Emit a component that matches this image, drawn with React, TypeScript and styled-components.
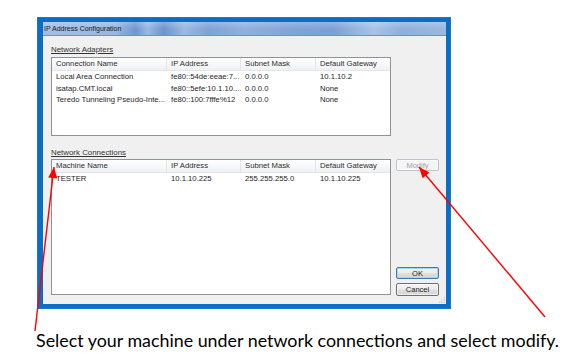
import React from "react";
import styled, { createGlobalStyle } from "styled-components";

const Global = createGlobalStyle`
  html, body { margin: 0; padding: 0; background: #fff; }
  body { width: 577px; height: 358px; overflow: hidden; }
  * { box-sizing: border-box; }
`;

const Page = styled.div`
  position: relative;
  width: 577px;
  height: 358px;
  background: #fff;
  padding: 17px 0 0 36px;
  font-family: "Liberation Sans", Arial, sans-serif;
  display: flex;
  flex-direction: column;
  align-items: flex-start;
`;

const Frame = styled.div`
  margin-left: 1px;
  width: 414px;
  height: 292px;
  background: #0b6dc5;
  padding: 5px 5px 5px 6px;
  display: flex;
  flex-direction: column;
  box-shadow: inset 0 0 0 1px #1e78cc;
`;

const TitleBar = styled.div`
  height: 14px;
  flex: none;
  display: flex;
  align-items: center;
  padding-left: 1px;
  font-size: 7px;
  color: #1a1a1a;
  border-bottom: 1px solid #6f92c2;
  background:
    linear-gradient(180deg, rgba(255,255,255,0.22) 0%, rgba(255,255,255,0) 55%),
    linear-gradient(90deg, #a3bfe5 0%, #98b7e1 18%, #6e97d0 23%, #9ab8e2 26%,
      #6b94cf 30%, #9bb9e2 35%, #7ea3d6 41%, #8fb0dc 50%, #7fa4d7 62%,
      #7aa0d5 72%, #a9c3e7 82%, #8fb0dd 89%, #9ab8e1 100%);
`;

const Client = styled.div`
  position: relative;
  flex: 1;
  background: #f0f0f0;
  display: grid;
  grid-template-columns: 340px 43px;
  column-gap: 5px;
  padding: 0 7px 8px 8px;
`;

const LeftCol = styled.div`
  display: flex;
  flex-direction: column;
  min-height: 0;
`;

const GroupLabel = styled.div<{ $top: number; $bottom: number }>`
  height: 11px;
  line-height: 11px;
  margin-top: ${(p) => p.$top}px;
  margin-bottom: ${(p) => p.$bottom}px;
  font-size: 7.9px;
  color: #333;
  text-decoration: underline;
  text-underline-offset: 1px;
  white-space: nowrap;
`;

const ListBox = styled.div<{ $height?: number }>`
  border: 1px solid #8e9299;
  background: #fff;
  ${(p) => (p.$height ? `height: ${p.$height}px; flex: none;` : `flex: 1; margin-bottom: 1px;`)}
  overflow: hidden;
`;

const HeaderRow = styled.div`
  display: grid;
  grid-template-columns: 115px 74px 75px 1fr;
  height: 13px;
  border-bottom: 1px solid #e3e5e8;
  background: linear-gradient(180deg, #ffffff 0%, #f6f7f9 60%, #eef0f3 100%);
`;

const HeaderCell = styled.div`
  padding-left: 4px;
  font-size: 7.7px;
  line-height: 12px;
  color: #2b2b2b;
  white-space: nowrap;
  overflow: hidden;
  border-right: 1px solid #e2e4e7;
  &:last-child { border-right: none; }
`;

const Row = styled.div`
  display: grid;
  grid-template-columns: 115px 74px 75px 1fr;
  height: 11.5px;
`;

const Cell = styled.div`
  padding-left: 4px;
  font-size: 7.7px;
  line-height: 11.5px;
  color: #1e1e1e;
  white-space: nowrap;
  overflow: hidden;
`;

const RightCol = styled.div`
  display: flex;
  flex-direction: column;
`;

const Button = styled.div<{ $variant: "disabled" | "default" | "normal"; $top?: number; $h: number }>`
  height: ${(p) => p.$h}px;
  margin-top: ${(p) => (p.$top !== undefined ? `${p.$top}px` : "0")};
  border-radius: 2px;
  display: flex;
  align-items: center;
  justify-content: center;
  font-size: 7.5px;
  border: 1px solid
    ${(p) => (p.$variant === "disabled" ? "#bfc3c7" : p.$variant === "default" ? "#3d7bad" : "#707070")};
  color: ${(p) => (p.$variant === "disabled" ? "#a3a3a3" : "#1a1a1a")};
  background: ${(p) =>
    p.$variant === "disabled"
      ? "#f4f4f4"
      : "linear-gradient(180deg, #f4f4f4 0%, #ececec 48%, #dedede 52%, #d6d6d6 100%)"};
  box-shadow: ${(p) => (p.$variant === "default" ? "inset 0 0 0 1px #a9d4f2" : "inset 0 0 0 1px rgba(255,255,255,0.6)")};
`;

const Spacer = styled.div`
  flex: 1;
`;

const Grip = styled.div`
  position: absolute;
  right: 1px;
  bottom: 1px;
  width: 7px;
  height: 7px;
  background-image: radial-gradient(circle, #b8b8b8 0.7px, transparent 0.9px);
  background-size: 2.5px 2.5px;
  clip-path: polygon(100% 0, 100% 100%, 0 100%);
`;

const Caption = styled.div`
  margin-top: 20px;
  font-family: Lato, "Open Sans", sans-serif;
  font-size: 17.85px;
  line-height: 22px;
  color: #000;
  white-space: nowrap;
`;

const Overlay = styled.svg`
  position: absolute;
  left: 0;
  top: 0;
  width: 577px;
  height: 358px;
  pointer-events: none;
`;

type Arrow = { x1: number; y1: number; x2: number; y2: number };

function head(a: Arrow, len = 11, half = 4.5): string {
  const dx = a.x2 - a.x1;
  const dy = a.y2 - a.y1;
  const l = Math.hypot(dx, dy);
  const ux = dx / l;
  const uy = dy / l;
  const bx = a.x2 - ux * len;
  const by = a.y2 - uy * len;
  const nx = -uy;
  const ny = ux;
  return `${a.x2},${a.y2} ${bx + nx * half},${by + ny * half} ${bx - nx * half},${by - ny * half}`;
}

const arrows: Arrow[] = [
  { x1: 35, y1: 331, x2: 54, y2: 167 },
  { x1: 545, y1: 317, x2: 419, y2: 167 },
];

const cols = ["Connection Name", "IP Address", "Subnet Mask", "Default Gateway"];
const adapters = [
  ["Local Area Connection", "fe80::54de:eeae:7...", "0.0.0.0", "10.1.10.2"],
  ["isatap.CMT.local", "fe80::5efe:10.1.10....", "0.0.0.0", "None"],
  ["Teredo Tunneling Pseudo-Inte...", "fe80::100:7fffe%12", "0.0.0.0", "None"],
];
const connCols = ["Machine Name", "IP Address", "Subnet Mask", "Default Gateway"];
const connections = [["TESTER", "10.1.10.225", "255.255.255.0", "10.1.10.225"]];

function List({ headers, rows, height }: { headers: string[]; rows: string[][]; height?: number }) {
  return (
    <ListBox $height={height}>
      <HeaderRow>
        {headers.map((h) => (
          <HeaderCell key={h}>{h}</HeaderCell>
        ))}
      </HeaderRow>
      {rows.map((r, i) => (
        <Row key={i}>
          {r.map((c, j) => (
            <Cell key={j}>{c}</Cell>
          ))}
        </Row>
      ))}
    </ListBox>
  );
}

export default function App() {
  return (
    <>
      <Global />
      <Page>
        <Frame>
          <TitleBar>IP Address Configuration</TitleBar>
          <Client>
            <LeftCol>
              <GroupLabel $top={8} $bottom={2}>Network Adapters</GroupLabel>
              <List headers={cols} rows={adapters} height={79} />
              <GroupLabel $top={11} $bottom={1}>Network Connections</GroupLabel>
              <List headers={connCols} rows={connections} />
            </LeftCol>
            <RightCol>
              <Button $variant="disabled" $top={123} $h={12}>Modify</Button>
              <Spacer />
              <Button $variant="default" $h={12}>OK</Button>
              <Button $variant="normal" $top={4} $h={13}>Cancel</Button>
            </RightCol>
            <Grip />
          </Client>
        </Frame>
        <Caption>Select your machine under network connections and select modify.</Caption>
        <Overlay viewBox="0 0 577 358">
          {arrows.map((a, i) => (
            <g key={i}>
              <line x1={a.x1} y1={a.y1} x2={a.x2} y2={a.y2} stroke="#ff0000" strokeWidth={1.4} />
              <polygon points={head(a)} fill="#ff0000" />
            </g>
          ))}
        </Overlay>
      </Page>
    </>
  );
}
